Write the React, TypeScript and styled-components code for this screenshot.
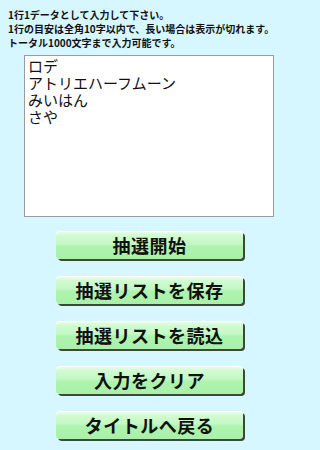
import React from "react";
import styled, { createGlobalStyle } from "styled-components";

const Global = createGlobalStyle`
  html, body { margin: 0; padding: 0; background: #d6f7ff; }
  body { font-family: "Noto Sans CJK JP", "Noto Sans", sans-serif; }
`;

const Page = styled.div`
  width: 299px;
  height: 450px;
  background: #d6f7ff;
  box-sizing: border-box;
  padding: 8px 0 0 8px;
  display: flex;
  flex-direction: column;
  overflow: hidden;
`;

const Notes = styled.div`
  font-size: 10px;
  font-weight: 700;
  line-height: 14px;
  color: #111;
  letter-spacing: 0;
`;

const Input = styled.textarea`
  margin: 5px 0 0 16px;
  width: 250px;
  height: 162px;
  box-sizing: border-box;
  border: 1px solid #9a9a9a;
  background: #fff;
  font-family: "Noto Sans CJK JP", sans-serif;
  font-size: 15px;
  line-height: 17px;
  padding: 1px 3px;
  color: #111;
  resize: none;
  outline: none;
`;

const Buttons = styled.div`
  display: flex;
  flex-direction: column;
  gap: 17px;
  margin: 14px 0 0 48px;
`;

const Button = styled.button`
  width: 187px;
  height: 28px;
  border: none;
  border-radius: 4px;
  padding: 0;
  background: linear-gradient(to bottom, #f0fff0 0%, #d2fbd2 15%, #c4f8c4 45%, #aef3ae 55%, #a8f1a8 100%);
  box-shadow: 2px 2px 0 #3a4a3a, inset 0 1px 0 #ffffff;
  font-family: "Noto Sans CJK JP", sans-serif;
  font-size: 18px;
  font-weight: 700;
  color: #111;
  line-height: 28px;
  display: flex;
  align-items: center;
  justify-content: center;
  letter-spacing: 0.5px;
`;

export default function App() {
  return (
    <>
      <Global />
      <Page>
        <Notes>
          <div>1行1データとして入力して下さい。</div>
          <div>1行の目安は全角10字以内で、長い場合は表示が切れます。</div>
          <div>トータル1000文字まで入力可能です。</div>
        </Notes>
        <Input defaultValue={"ロデ\nアトリエハーフムーン\nみいはん\nさや"} />
        <Buttons>
          <Button>抽選開始</Button>
          <Button>抽選リストを保存</Button>
          <Button>抽選リストを読込</Button>
          <Button>入力をクリア</Button>
          <Button>タイトルへ戻る</Button>
        </Buttons>
      </Page>
    </>
  );
}
